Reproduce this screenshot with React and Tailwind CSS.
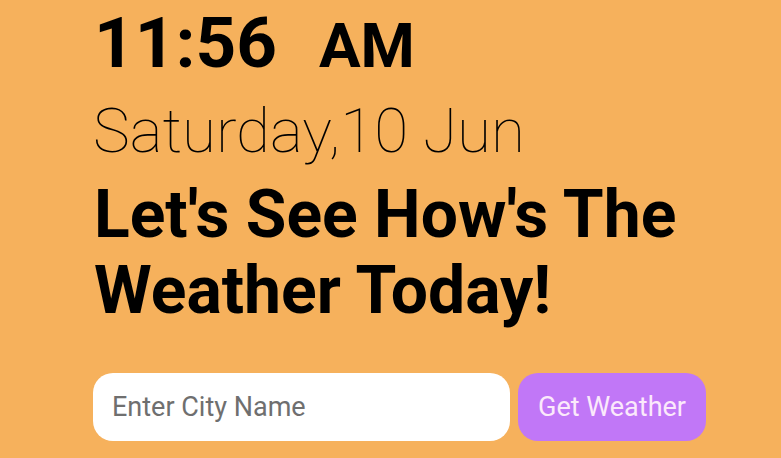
export default function App() {
  return (
    <div
      className="w-[781px] h-[458px] overflow-hidden bg-[#f6b15c] text-black"
      style={{ fontFamily: "Roboto, 'Noto Sans', sans-serif" }}
    >
      <div className="pl-[93px] w-[706px] flex flex-col">
        <div className="mt-[3px] h-[84px] leading-[80px] text-[71px] font-bold whitespace-nowrap">
          <span className="ml-[1px]">11:56</span>
          <span className="text-[62px] ml-[42px]">AM</span>
        </div>
        <div className="h-[90px] text-[62px] font-thin leading-[88px] whitespace-nowrap">Saturday,10 Jun</div>
        <h1 className="text-[66px] font-bold leading-[76px] ml-[1px]">
          Let's See How's The Weather Today!
        </h1>
        <div className="flex gap-[8px] mt-[44px]">
          <input
            placeholder="Enter City Name"
            className="w-[417px] h-[68px] bg-white rounded-[20px] px-[19px] text-[27px] text-black placeholder:text-[#6f6f6f] outline-none"
          />
          <button className="w-[188px] h-[68px] rounded-[20px] bg-[#c177f7] text-[#fbe9fb] text-[27px]">
            Get Weather
          </button>
        </div>
      </div>
    </div>
  );
}
